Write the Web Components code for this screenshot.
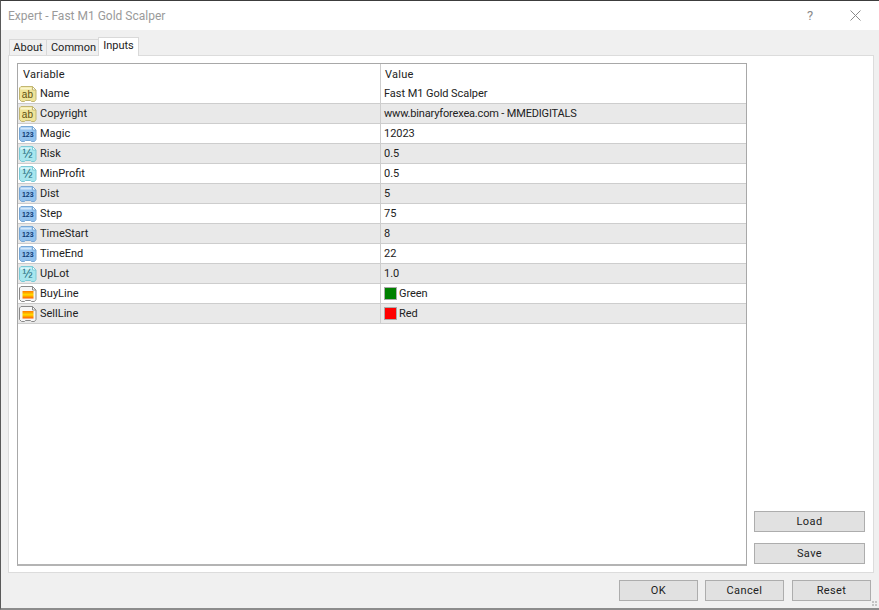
<!DOCTYPE html>
<html><head><meta charset="utf-8"><title>Expert</title>
<style>
html,body{margin:0;padding:0;width:879px;height:610px;overflow:hidden;background:#f0f0f0}
body{font:11px Roboto,"Liberation Sans",Arial,sans-serif;color:#1a1a1a}
</style></head><body>
<expert-dialog>
  <param-row slot="rows" icon="ab" name="Name" value="Fast M1 Gold Scalper"></param-row>
  <param-row slot="rows" icon="ab" name="Copyright" value="www.binaryforexea.com - MMEDIGITALS" tight alt></param-row>
  <param-row slot="rows" icon="int" name="Magic" value="12023"></param-row>
  <param-row slot="rows" icon="dbl" name="Risk" value="0.5" alt></param-row>
  <param-row slot="rows" icon="dbl" name="MinProfit" value="0.5"></param-row>
  <param-row slot="rows" icon="int" name="Dist" value="5" alt></param-row>
  <param-row slot="rows" icon="int" name="Step" value="75"></param-row>
  <param-row slot="rows" icon="int" name="TimeStart" value="8" alt></param-row>
  <param-row slot="rows" icon="int" name="TimeEnd" value="22"></param-row>
  <param-row slot="rows" icon="dbl" name="UpLot" value="1.0" alt></param-row>
  <param-row slot="rows" icon="clr" name="BuyLine" value="Green" swatch="#008000"></param-row>
  <param-row slot="rows" icon="clr" name="SellLine" value="Red" swatch="#ff0000" alt></param-row>
</expert-dialog>
<script>
const ICONS={
 ab:{f:'#efe49a',s:'#c2b672',c:'#faf5cc',t:'ab',tc:'#5f5010',fs:10},
 int:{f:'#93c2ee',s:'#78a8d6',c:'#d4e8fb',t:'123',tc:'#0f3a72',fs:7},
 dbl:{f:'#a8e6ee',s:'#7ccad6',c:'#dcf7fb',t:'½',tc:'#1c6878',fs:12}
};
let gid=0;
class VarIcon extends HTMLElement{
 constructor(){super();this.attachShadow({mode:'open'})}
 connectedCallback(){
  const k=this.getAttribute('type');let inner;
  const body=(f,s)=>`<path d="M2 1.5H13.5L17 5V14.5L15.5 16.5H12.5L11.5 15.5H6.5L5.5 16.5H2.5L.5 14.5V3Z" fill="${f}" stroke="${s}"/><path d="M13.5 1.5V5H17L13.5 1.5Z" fill="#fff" stroke="${s}"/>`;
  if(k==='clr'){
   const id='g'+(gid++);
   inner=body('#f6f6f6','#8a8a8a')+`<defs><linearGradient id="${id}" x1="0" y1="0" x2="0" y2="1"><stop offset="0" stop-color="#ff7a00"/><stop offset=".5" stop-color="#ffdc00"/><stop offset="1" stop-color="#ff5a00"/></linearGradient></defs><rect x="3.5" y="6" width="11" height="7.5" fill="url(#${id})"/>`;
  }else{
   const i=ICONS[k];
   inner=body(i.f,i.s)+`<rect x="1.5" y="2.5" width="11" height="2" fill="${i.c}"/><text x="${k==='int'?8.8:8.4}" y="${k==='int'?12.4:13.2}" text-anchor="middle" font-family="Liberation Sans,sans-serif" font-size="${i.fs}" font-weight="${k==='int'?700:400}" fill="${i.tc}">${i.t}</text>`;
  }
  this.shadowRoot.innerHTML=`<style>:host{display:block;width:18px;height:18px}svg{display:block}</style><svg width="18" height="18" viewBox="0 0 18 18">${inner}</svg>`;
 }
}
customElements.define('var-icon',VarIcon);

class ParamRow extends HTMLElement{
 constructor(){super();this.attachShadow({mode:'open'})}
 connectedCallback(){
  const g=a=>this.getAttribute(a);
  const sw=g('swatch');
  this.shadowRoot.innerHTML=`<style>
  :host{display:grid;grid-template-columns:363px 1fr;height:20px;box-sizing:border-box;border-bottom:1px solid #cdcdcd;background:${this.hasAttribute('alt')?'#e9e9e9':'#fff'}}
  .a{display:flex;align-items:center;border-right:1px solid #cdcdcd;padding-left:1px;gap:3px;height:19px}
  .b{display:flex;align-items:center;padding-left:3px;height:19px;gap:2px}
  .s{width:13px;height:13px;box-sizing:border-box;border:1px solid #aaa}
  span{white-space:nowrap;color:#222}
  .v{letter-spacing:${this.hasAttribute('tight')?'-.17px':'-.05px'}}
  </style><div class="a"><var-icon type="${g('icon')}"></var-icon><span>${g('name')}</span></div>
  <div class="b">${sw?`<i class="s" style="background:${sw}"></i>`:''}<span class="v">${g('value')}</span></div>`;
 }
}
customElements.define('param-row',ParamRow);

class DlgButton extends HTMLElement{
 constructor(){super();this.attachShadow({mode:'open'}).innerHTML=`<style>
 :host{display:flex;align-items:center;justify-content:center;box-sizing:border-box;height:21px;background:#e1e1e1;border:1px solid #adadad;color:#222;font-size:11px;letter-spacing:.4px}
 </style><slot></slot>`}
}
customElements.define('dlg-button',DlgButton);

class DlgTab extends HTMLElement{
 constructor(){super();this.attachShadow({mode:'open'}).innerHTML=`<style>
 :host{display:flex;align-items:center;justify-content:center;box-sizing:border-box;height:16px;margin-top:2px;background:#f0f0f0;border:1px solid #d9d9d9;border-bottom:0;margin-right:-1px;color:#222}
 :host([active]){margin-top:0;background:#fff;position:relative;z-index:1;margin-bottom:-1px;height:19px;padding-bottom:3px}
 </style><slot></slot>`}
}
customElements.define('dlg-tab',DlgTab);

class ExpertDialog extends HTMLElement{
 constructor(){super();this.attachShadow({mode:'open'}).innerHTML=`<style>
 :host{display:flex;flex-direction:column;position:relative;width:879px;height:610px;box-sizing:border-box;border-top:1px solid #3c3c3c;border-left:1px solid #5a5a5a;border-bottom:2px solid #8c8c8c;background:#f0f0f0}
 .title{height:29px;flex:none;background:#fff;display:flex;align-items:center;padding-left:7px;font-size:12px;color:#9a9a9a}
 .title .t{flex:1}
 .q{width:16px;text-align:center;font-size:13px;color:#8a8a8a;margin-right:32px}
 .x{margin-right:18px;display:block}
 .tabs{display:flex;height:18px;margin:7px 0 0 8px;flex:none}
 .panel{margin:0 5px 0 7px;height:518px;flex:none;box-sizing:border-box;background:#fff;border:1px solid #dcdcdc;padding:7px 8px 6px 8px;display:flex;gap:7px}
 .grid{width:730px;box-sizing:border-box;border:1px solid #a8a8a8;border-bottom:2px solid #b4b4b4;display:flex;flex-direction:column;background:#fff}
 .head{display:grid;grid-template-columns:363px 1fr;height:20px;flex:none}
 .head div{display:flex;align-items:center;padding-left:5px;letter-spacing:.25px;color:#222}
 .head div:first-child{border-right:1px solid #cdcdcd;height:20px}
 .head div+div{padding-left:4px}
 .side{width:111px;display:flex;flex-direction:column;justify-content:flex-end;gap:11px;padding-bottom:2px}
 .foot{display:flex;justify-content:flex-end;padding:7px 8px 0 0;flex:none}
 .foot dlg-button{width:79px}
 .foot dlg-button:nth-child(2){margin:0 8px 0 7px}
 .grip{position:absolute;right:1px;bottom:1px;display:block}
 </style>
 <div class="title"><span class="t">Expert - Fast M1 Gold Scalper</span><span class="q">?</span>
 <svg class="x" width="11" height="11" viewBox="0 0 11 11"><path d="M.5.5l10 10M10.5.5l-10 10" stroke="#8a8a8a" stroke-width="1" fill="none"/></svg></div>
 <div class="tabs"><dlg-tab style="width:38px">About</dlg-tab><dlg-tab style="width:53px;padding-left:2px">Common</dlg-tab><dlg-tab active style="width:41px">Inputs</dlg-tab></div>
 <div class="panel">
  <div class="grid"><div class="head"><div>Variable</div><div>Value</div></div><slot name="rows"></slot></div>
  <div class="side"><dlg-button>Load</dlg-button><dlg-button>Save</dlg-button></div>
 </div>
 <div class="foot"><dlg-button>OK</dlg-button><dlg-button>Cancel</dlg-button><dlg-button>Reset</dlg-button></div>
 <svg class="grip" width="6" height="6" viewBox="0 0 6 6"><path d="M0 0h2v2H0zM3 0h2v2H3zM0 3h2v2H0zM3 3h2v2H3z" fill="#c4c4c4"/></svg>`}
}
customElements.define('expert-dialog',ExpertDialog);
</script>
</body></html>
